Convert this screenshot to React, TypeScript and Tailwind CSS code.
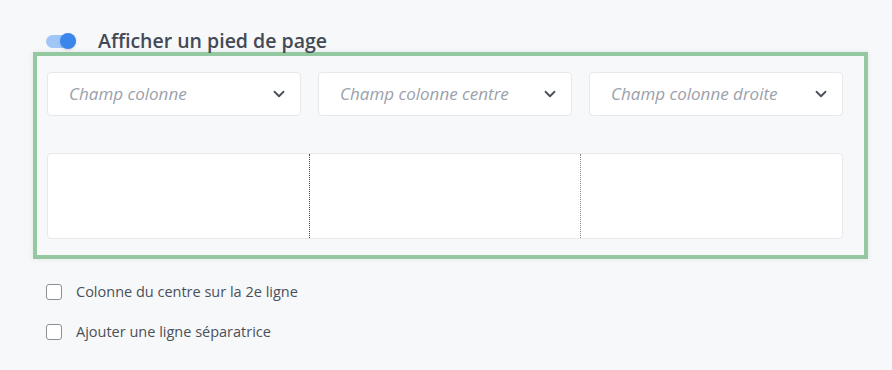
import { ChevronDown } from "lucide-react";

const columns = ["Champ colonne", "Champ colonne centre", "Champ colonne droite"];
const options = ["Colonne du centre sur la 2e ligne", "Ajouter une ligne séparatrice"];

function Select({ placeholder }: { placeholder: string }) {
  return (
    <div className="flex h-[44px] items-center justify-between rounded-[4px] border border-[#e6e8ec] bg-white pl-[21px] pr-[12px]">
      <span className="text-[17px] italic text-[#9ba1ab]">{placeholder}</span>
      <ChevronDown size={18} strokeWidth={2.4} className="text-[#4a4f57]" />
    </div>
  );
}

export default function App() {
  return (
    <div
      className="h-[370px] w-[892px] bg-[#f7f8fa] pl-[33px] pt-[29px] text-[#454b55]"
      style={{ fontFamily: '"Open Sans", "Noto Sans", sans-serif' }}
    >
      <div className="ml-[13px] flex h-[24px] items-center">
        <div className="relative h-[13px] w-[30px] rounded-full bg-[#9fc6f7]">
          <div className="absolute right-0 top-[-1.5px] h-[16px] w-[16px] rounded-full bg-[#3a86ea] shadow-sm" />
        </div>
        <h2 className="ml-[22px] text-[19.5px] font-semibold text-[#434a55]">Afficher un pied de page</h2>
      </div>

      <div className="mt-[-1px] w-[835px] border-4 border-[#93c8a0] bg-[#f7f8fa] pb-[16px] pl-[10px] pt-[16px] shadow-[0_0_6px_rgba(0,0,0,0.08)]">
        <div className="grid grid-cols-[254px_254px_254px] gap-x-[17px]">
          {columns.map((c) => (
            <Select key={c} placeholder={c} />
          ))}
        </div>
        <div className="mt-[37px] flex h-[86px] w-[796px] rounded-[4px] border border-[#e6e8ec] bg-white">
          <div className="w-[262px] border-r border-dotted border-[#444]" />
          <div className="w-[271px] border-r border-dotted border-[#888]" />
          <div className="flex-1" />
        </div>
      </div>

      <div className="ml-[13px] mt-[22px] flex flex-col gap-[18px]">
        {options.map((o) => (
          <label key={o} className="flex items-center">
            <span className="h-[16px] w-[16px] rounded-[3px] border border-[#8a8f96] bg-white" />
            <span className="ml-[14px] text-[14.5px] text-[#4a5059]">{o}</span>
          </label>
        ))}
      </div>
    </div>
  );
}
